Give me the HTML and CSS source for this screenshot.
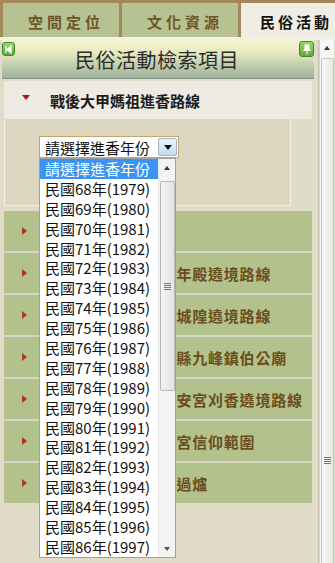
FILE: index.html
```html
<!DOCTYPE html>
<html lang="zh-Hant">
<head>
    <meta charset="UTF-8">
    <meta name="viewport" content="width=device-width, initial-scale=1.0">
    <title>民俗活動檢索</title>
    <link rel="stylesheet" href="styles.css">
</head>
<body>
    <div class="tabs">
        <div class="tab">空間定位</div>
        <div class="tab">文化資源</div>
        <div class="tab active">民俗活動</div>
    </div>
    <div class="page">
        <div class="panel">
            <div class="panel-head">
                <span class="head-btn collapse">
                    <svg width="9" height="9" viewBox="0 0 9 9"><path d="M2 1v7M7 1L3 4.5 7 8z" fill="#fff" stroke="#fff" stroke-width="1.2"/></svg>
                </span>
                <span class="head-title">民俗活動檢索項目</span>
                <span class="head-btn pin">
                    <svg width="10" height="11" viewBox="0 0 10 11"><path d="M3 1h4v4l1.5 1.5h-7L3 5z M5 6.5V10.5" fill="#fff" stroke="#fff" stroke-width="1"/></svg>
                </span>
            </div>

            <div class="item open">
                <span class="arrow down"></span>
                <span class="item-text">戰後大甲媽祖進香路線</span>
            </div>
            <div class="item-body">
                <div class="select-wrap">
                    <div class="select">
                        <span class="select-text">請選擇進香年份</span>
                        <span class="select-btn"><span class="tri-down"></span></span>
                    </div>
                    <div class="dropdown">
                        <ul class="options">
                            <li class="selected">請選擇進香年份</li>
                            <li>民國68年(1979)</li>
                            <li>民國69年(1980)</li>
                            <li>民國70年(1981)</li>
                            <li>民國71年(1982)</li>
                            <li>民國72年(1983)</li>
                            <li>民國73年(1984)</li>
                            <li>民國74年(1985)</li>
                            <li>民國75年(1986)</li>
                            <li>民國76年(1987)</li>
                            <li>民國77年(1988)</li>
                            <li>民國78年(1989)</li>
                            <li>民國79年(1990)</li>
                            <li>民國80年(1991)</li>
                            <li>民國81年(1992)</li>
                            <li>民國82年(1993)</li>
                            <li>民國83年(1994)</li>
                            <li>民國84年(1995)</li>
                            <li>民國85年(1996)</li>
                            <li>民國86年(1997)</li>
                        </ul>
                        <div class="list-scroll">
                            <span class="sb-arrow up"></span>
                            <div class="list-thumb"><span class="grip"></span></div>
                            <span class="sb-arrow down"></span>
                        </div>
                    </div>
                </div>
            </div>

            <div class="rows">
                <div class="row"><span class="arrow right"></span><span class="row-text">戰後鎮瀾宮分香</span></div>
                <div class="row"><span class="arrow right"></span><span class="row-text">戰後臺中市南屯萬年殿遶境路線</span></div>
                <div class="row"><span class="arrow right"></span><span class="row-text">戰後新竹市新竹都城隍遶境路線</span></div>
                <div class="row"><span class="arrow right"></span><span class="row-text">戰後苗栗縣與新竹縣九峰鎮伯公廟</span></div>
                <div class="row"><span class="arrow right"></span><span class="row-text">戰後臺南市學甲慈安宮刈香遶境路線</span></div>
                <div class="row"><span class="arrow right"></span><span class="row-text">日治時期北港朝天宮信仰範圍</span></div>
                <div class="row"><span class="arrow right"></span><span class="row-text">戰後大甲鎮瀾宮之過爐</span></div>
            </div>
        </div>

        <div class="scrollbar">
            <span class="sb-arrow up"></span>
            <div class="page-thumb"><span class="grip"></span></div>
        </div>
    </div>
</body>
</html>
```

FILE: styles.css
```css
* {
    box-sizing: border-box;
    margin: 0;
    padding: 0;
    font-family: "Noto Sans CJK TC", "Noto Sans", sans-serif;
}
body {
    width: 335px;
    height: 563px;
    overflow: hidden;
    background: #e1dcc7;
}
ul {
    list-style: none;
}

/* top tabs */
.tabs {
    display: flex;
    gap: 3px;
    height: 40px;
    padding: 3px 0 0 3px;
    background: #a5885a;
    border-bottom: 3px solid #f3f1e6;
}
.tab {
    width: 116px;
    display: flex;
    align-items: center;
    justify-content: center;
    padding: 2px 0 0 10px;
    background: #b7c293;
    color: #6e5526;
    font-size: 15px;
    font-weight: 700;
    letter-spacing: 4px;
    white-space: nowrap;
}
.tab.active {
    flex: 1;
    justify-content: flex-start;
    padding-left: 19px;
    overflow: hidden;
    background: #efede4;
    color: #111;
    letter-spacing: 3px;
}

/* page */
.page {
    display: flex;
    height: 523px;
}
.panel {
    width: 319px;
    padding: 0 6px 0 4px;
    border-right: 1px solid #c9c5b3;
}
.panel-head {
    height: 39px;
    margin: 0 -2px;
    display: flex;
    align-items: flex-start;
    justify-content: space-between;
    background: linear-gradient(#f6f5d2 0%, #e6e8c0 35%, #b7c6a8 75%, #a2b39c 100%);
    border-bottom: 1px solid #7f9283;
}
.head-title {
    align-self: center;
    margin-top: 1px;
    font-size: 20px;
    color: #2b2b2b;
    letter-spacing: 0.5px;
}
.head-btn {
    width: 13px;
    height: 14px;
    margin-top: 2px;
    border-radius: 3px;
    border: 1px solid #3f8a2c;
    background: linear-gradient(#9ed66c, #5caa38);
    display: flex;
    align-items: center;
    justify-content: center;
}
.head-btn.pin {
    width: 15px;
    height: 16px;
    margin-top: 1px;
}

/* expanded item */
.item {
    height: 38px;
    margin-top: 2px;
    display: flex;
    align-items: center;
    background: #eeebe2;
}
.item-text {
    font-size: 15px;
    font-weight: 700;
    color: #1c1c1c;
    margin-left: 20px;
}
.arrow {
    width: 0;
    height: 0;
    margin-left: 18px;
}
.arrow.down {
    border-left: 4px solid transparent;
    border-right: 4px solid transparent;
    border-top: 5px solid #9c1a14;
    margin-top: -5px;
}
.arrow.right {
    border-top: 4px solid transparent;
    border-bottom: 4px solid transparent;
    border-left: 5px solid #b4361a;
}
.item-body {
    height: 87px;
    width: 287px;
    padding: 17px 0 0 34px;
    background: #ddd7c2;
    border: 1px solid #f2f0e6;
    border-top: none;
}

/* select */
.select-wrap {
    position: relative;
    width: 140px;
}
.select {
    height: 22px;
    display: flex;
    align-items: center;
    justify-content: space-between;
    background: #fff;
    border: 1px solid #c0a86e;
}
.select-text {
    font-size: 15px;
    padding-left: 5px;
    color: #111;
}
.select-btn {
    width: 19px;
    height: 18px;
    margin-right: 1px;
    border: 1px solid #9fb3c8;
    border-radius: 2px;
    background: linear-gradient(#eaf3fb, #c4dcf1);
    display: flex;
    align-items: center;
    justify-content: center;
}
.tri-down {
    border-left: 4px solid transparent;
    border-right: 4px solid transparent;
    border-top: 5px solid #111;
}

/* open list, over the rows */
.dropdown {
    position: absolute;
    top: 22px;
    left: 0;
    width: 137px;
    height: 400px;
    display: flex;
    background: #fff;
    border: 1px solid #a0a0a0;
    z-index: 5;
}
.options {
    flex: 1;
}
.options li {
    height: 19.9px;
    line-height: 20px;
    font-size: 15px;
    padding-left: 5px;
    color: #111;
    white-space: nowrap;
}
.options li.selected {
    background: #3a94f0;
    color: #fff;
}
.list-scroll {
    width: 17px;
    display: flex;
    flex-direction: column;
    align-items: center;
    background: #f3f3f3;
    border-left: 1px solid #e6e6e6;
}
.list-thumb {
    width: 15px;
    height: 210px;
    margin-top: 2px;
    display: flex;
    align-items: center;
    justify-content: center;
    border: 1px solid #b8b8b8;
    border-radius: 2px;
    background: linear-gradient(90deg, #f4f4f4, #e2e2e2);
}
.sb-arrow {
    width: 0;
    height: 0;
    border-left: 3.5px solid transparent;
    border-right: 3.5px solid transparent;
}
.sb-arrow.up {
    border-bottom: 4px solid #333;
    margin-top: 7px;
}
.sb-arrow.down {
    border-top: 4px solid #555;
    margin-top: auto;
    margin-bottom: 6px;
}
.list-scroll .sb-arrow.up {
    margin-bottom: 9px;
}
.grip {
    width: 7px;
    height: 7px;
    background: repeating-linear-gradient(#777 0 1px, transparent 1px 2px);
}

/* collapsed rows */
.rows {
    margin-top: 5px;
    display: flex;
    flex-direction: column;
    gap: 2px;
    background: #d8d6c4;
}
.row {
    height: 40px;
    display: flex;
    align-items: center;
    background: #b3c28c;
}
.row-text {
    margin-left: 23px;
    font-size: 15px;
    font-weight: 700;
    letter-spacing: 0.8px;
    color: #6a4d1b;
    white-space: nowrap;
}

/* page scrollbar */
.scrollbar {
    width: 15px;
    display: flex;
    flex-direction: column;
    align-items: center;
    background: #f6f6f6;
    border-left: 1px solid #d4d4d4;
}
.scrollbar .sb-arrow.up {
    margin-top: 6px;
}
.page-thumb {
    width: 13px;
    flex: 1;
    margin-top: 8px;
    padding-top: 398px;
    display: flex;
    justify-content: center;
    align-items: flex-start;
    border: 1px solid #c4c4c4;
    border-bottom: none;
    border-radius: 2px 2px 0 0;
    background: linear-gradient(90deg, #f8f8f8, #e6e6e6);
}
```
